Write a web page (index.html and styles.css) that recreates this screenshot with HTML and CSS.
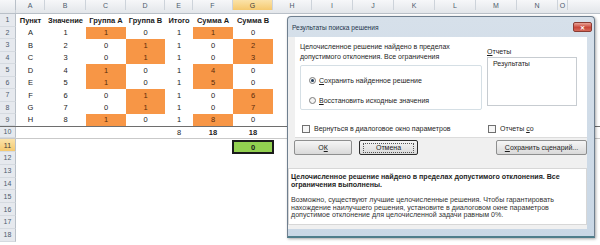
FILE: index.html
```html
<!DOCTYPE html>
<html>
    <head>
        <meta charset="utf-8">
        <link rel="stylesheet" href="styles.css">
    </head>
    <body>
        <div class="sheet">
            <div class="row head">
                <div class="corner"></div>
                <div class="col">A</div><div class="col">B</div><div class="col">C</div><div class="col">D</div>
                <div class="col">E</div><div class="col">F</div><div class="col active">G</div><div class="col">H</div>
                <div class="col">I</div><div class="col">J</div><div class="col">K</div><div class="col">L</div>
                <div class="col">M</div><div class="col">N</div><div class="col">O</div><div class="col"></div>
            </div>
            <div class="row">
                <div class="num">1</div>
                <div class="cell bold">Пункт</div><div class="cell bold">Значение</div><div class="cell bold">Группа А</div>
                <div class="cell bold">Группа В</div><div class="cell bold">Итого</div><div class="cell bold">Сумма А</div><div class="cell bold">Сумма В</div>
            </div>
            <div class="row">
                <div class="num">2</div>
                <div class="cell">A</div><div class="cell">1</div><div class="cell hot">1</div><div class="cell">0</div><div class="cell">1</div><div class="cell hot">1</div><div class="cell">0</div>
            </div>
            <div class="row">
                <div class="num">3</div>
                <div class="cell">B</div><div class="cell">2</div><div class="cell">0</div><div class="cell hot">1</div><div class="cell">1</div><div class="cell">0</div><div class="cell hot">2</div>
            </div>
            <div class="row">
                <div class="num">4</div>
                <div class="cell">C</div><div class="cell">3</div><div class="cell">0</div><div class="cell hot">1</div><div class="cell">1</div><div class="cell">0</div><div class="cell hot">3</div>
            </div>
            <div class="row">
                <div class="num">5</div>
                <div class="cell">D</div><div class="cell">4</div><div class="cell hot">1</div><div class="cell">0</div><div class="cell">1</div><div class="cell hot">4</div><div class="cell">0</div>
            </div>
            <div class="row">
                <div class="num">6</div>
                <div class="cell">E</div><div class="cell">5</div><div class="cell hot">1</div><div class="cell">0</div><div class="cell">1</div><div class="cell hot">5</div><div class="cell">0</div>
            </div>
            <div class="row">
                <div class="num">7</div>
                <div class="cell">F</div><div class="cell">6</div><div class="cell">0</div><div class="cell hot">1</div><div class="cell">1</div><div class="cell">0</div><div class="cell hot">6</div>
            </div>
            <div class="row">
                <div class="num">8</div>
                <div class="cell">G</div><div class="cell">7</div><div class="cell">0</div><div class="cell hot">1</div><div class="cell">1</div><div class="cell">0</div><div class="cell hot">7</div>
            </div>
            <div class="row last">
                <div class="num">9</div>
                <div class="cell">H</div><div class="cell">8</div><div class="cell hot">1</div><div class="cell">0</div><div class="cell">1</div><div class="cell hot">8</div><div class="cell">0</div>
            </div>
            <div class="row tall total">
                <div class="num">10</div>
                <div class="cell"></div><div class="cell"></div><div class="cell"></div><div class="cell"></div>
                <div class="cell">8</div><div class="cell bold">18</div><div class="cell bold">18</div>
            </div>
            <div class="row tall">
                <div class="num active">11</div>
                <div class="cell"></div><div class="cell"></div><div class="cell"></div><div class="cell"></div>
                <div class="cell"></div><div class="cell"></div><div class="cell bold picked">0</div>
            </div>
            <div class="row tall"><div class="num">12</div></div>
            <div class="row tall"><div class="num">13</div></div>
            <div class="row tall"><div class="num">14</div></div>
            <div class="row tall"><div class="num">15</div></div>
            <div class="row tall"><div class="num">16</div></div>
            <div class="row tall"><div class="num">17</div></div>
            <div class="row tall"><div class="num">18</div></div>
        </div>

        <!-- solver results window, floats over the sheet -->
        <div class="dialog">
            <div class="titlebar">
                <span class="title">Результаты поиска решения</span>
                <span class="close">✕</span>
            </div>
            <div class="dlg-body">
                <div class="top-panel">
                    <div class="left-col">
                        <p class="lead">Целочисленное решение найдено в пределах<br>допустимого отклонения. Все ограничения</p>
                        <div class="group">
                            <div class="opt"><span class="radio on"></span><span><u>С</u>охранить найденное решение</span></div>
                            <div class="opt"><span class="radio"></span><span><u>В</u>осстановить исходные значения</span></div>
                        </div>
                    </div>
                    <div class="right-col">
                        <div class="label"><u>О</u>тчеты</div>
                        <div class="listbox">Результаты</div>
                    </div>
                    <div class="check first"><span class="box"></span><span>Вернуться в диалоговое окно параметров</span></div>
                    <div class="check"><span class="box"></span><span>Отчеты <u>с</u>о</span></div>
                </div>
                <div class="buttons">
                    <div class="button ok"><span>О<u>К</u></span></div>
                    <div class="button cancel"><span>Отмена</span></div>
                    <div class="button save"><span><u>С</u>охранить сценарий...</span></div>
                </div>
                <div class="message">
                    <p class="strong">Целочисленное решение найдено в пределах допустимого отклонения. Все<br>ограничения выполнены.</p>
                    <p class="note">Возможно, существуют лучшие целочисленные решения. Чтобы гарантировать<br>нахождение наилучшего решения, установите в диалоговом окне параметров<br>допустимое отклонение для целочисленной задачи равным 0%.</p>
                </div>
            </div>
        </div>
    </body>
</html>
```

FILE: styles.css
```css
body {
    margin: 0;
    width: 600px;
    height: 245px;
    overflow: hidden;
    background-color: #ffffff;
    font-family: 'Liberation Sans', Arial, sans-serif;
}

    /*spreadsheet grid*/

.sheet {
    width: 600px;
}

.row {
    display: grid;
    grid-template-columns: 16px 29px 41px 40px 39px 28px 40px 40px 39px 41px 41px 41px 41px 41px 41px 10px;
    height: 12.5px;
    font-size: 7.5px;
    color: #1b1b1b;
}

.row.tall {
    height: 12.8px;
}

.row.head {
    height: 14px;
    background: linear-gradient(#f6f7f9, #e3e6ea);
    border-bottom: 1px solid #b9c0c8;
    box-sizing: border-box;
}

.row.last {
    border-bottom: 1.5px solid #6e6e6e;
    box-sizing: border-box;
}

.row.total {
    border-bottom: 1px solid #c9c9c9;
    box-sizing: border-box;
}

.corner {
    border-right: 1px solid #b9c0c8;
}

.col {
    display: flex;
    align-items: center;
    justify-content: center;
    font-size: 7px;
    color: #4d5b6d;
    border-right: 1px solid #cdd3da;
}

.col.active {
    background: linear-gradient(#fbe3a9, #f5c96f);
    color: #3a3a3a;
}

.num {
    display: flex;
    align-items: center;
    justify-content: center;
    font-size: 7px;
    color: #4d5b6d;
    background-color: #e6e9ee;
    border-right: 1px solid #b9c0c8;
    border-bottom: 1px solid #d5dae0;
    box-sizing: border-box;
}

.num.active {
    background: linear-gradient(#fbe3a9, #f5c96f);
    color: #3a3a3a;
}

.cell {
    display: flex;
    align-items: center;
    justify-content: center;
}

.cell.bold {
    font-weight: bold;
}

.cell.hot {
    background-color: #f79646;
    color: #5a2a0a;
}

.cell.picked {
    background-color: #92d050;
    border: 2px solid #1a1a1a;
    margin: 1px -1px -2px -1px;
}

    /*dialog window*/

.dialog {
    position: absolute;
    left: 287px;
    top: 16px;
    width: 308px;
    height: 222px;
    box-sizing: border-box;
    background: linear-gradient(#d6e0ea, #c9d7e5);
    border: 1px solid #6f7f8f;
    border-bottom: 2px solid #4f7d8b;
    border-radius: 4px 4px 0 0;
    box-shadow: 1px 1px 3px rgba(0, 0, 0, 0.35);
    font-size: 7px;
    color: #1e1e1e;
}

.titlebar {
    height: 20px;
    display: flex;
    align-items: center;
    justify-content: space-between;
    padding: 0 2px 0 4px;
}

.title {
    font-size: 6.6px;
    color: #24364a;
}

.close {
    width: 19px;
    height: 10px;
    display: flex;
    align-items: center;
    justify-content: center;
    border-radius: 2px;
    border: 1px solid #8a3c33;
    background: linear-gradient(#e9a396, #c9473a 55%, #d66a5a);
    color: #ffffff;
    font-size: 6px;
    font-weight: bold;
    box-sizing: border-box;
}

.dlg-body {
    margin: 0 7px 0 0;
    height: 192px;
    background-color: #f0f0f0;
    display: flex;
    flex-direction: column;
}

.top-panel {
    margin-left: 7px;
    height: 101px;
    box-sizing: border-box;
    background-color: #ffffff;
    border-bottom: 1px solid #dcdcdc;
    display: grid;
    grid-template-columns: 182px 90px;
    column-gap: 5px;
    padding: 5px 0 0 5px;
}

.lead {
    margin: 0;
    line-height: 10px;
}

.group {
    margin-top: 3px;
    height: 45px;
    box-sizing: border-box;
    border: 1px solid #d5dfe5;
    border-radius: 2px;
    padding-top: 9px;
}

.opt {
    display: flex;
    align-items: center;
    height: 10px;
    margin-bottom: 10px;
    padding-left: 8px;
}

.radio {
    width: 5px;
    height: 5px;
    border: 1px solid #7c7c7c;
    border-radius: 50%;
    background-color: #f4f4f4;
    margin-right: 3px;
    position: relative;
}

.radio.on::after {
    content: "";
    position: absolute;
    left: 1px;
    top: 1px;
    width: 3px;
    height: 3px;
    border-radius: 50%;
    background-color: #1f3a57;
}

.right-col {
    padding-top: 10px;
}

.label {
    line-height: 10px;
    margin-top: -5px;
}

.listbox {
    height: 49px;
    box-sizing: border-box;
    border: 1px solid #c7ccd1;
    padding: 2px 0 0 5px;
    line-height: 8px;
}

.check {
    display: flex;
    align-items: center;
    height: 10px;
    margin-top: 10px;
    padding-left: 1px;
}

.check.first {
    padding-left: 2px;
}

.box {
    width: 6px;
    height: 6px;
    border: 1px solid #707070;
    background-color: #f6f6f6;
    margin-right: 4px;
}

.buttons {
    display: flex;
    margin-top: 2px;
    padding-left: 6px;
    height: 15px;
}

.button {
    height: 15px;
    box-sizing: border-box;
    display: flex;
    align-items: center;
    justify-content: center;
    border: 1px solid #8e8f8f;
    border-radius: 2px;
    background: linear-gradient(#f5f5f5, #e8e8e8 50%, #d9d9d9);
}

.button.ok {
    width: 58px;
}

.button.cancel {
    width: 59px;
    margin-left: 7px;
    border: 1px solid #2c2c2c;
}

.button.cancel span {
    border: 1px dotted #555;
    padding: 0 12px;
    line-height: 8px;
}

.button.save {
    width: 91px;
    margin-left: auto;
}

.message {
    margin-top: 13px;
    height: 57px;
    box-sizing: border-box;
    background-color: #ffffff;
    border: 1px solid #d7d7d7;
    padding: 4px 2px 0 2px;
    white-space: nowrap;
}

.message p {
    margin: 0;
}

.strong {
    font-weight: bold;
    font-size: 7.1px;
    line-height: 8px;
}

.note {
    margin-top: 8px !important;
    font-size: 7.1px;
    line-height: 7.5px;
    color: #333333;
}
```
